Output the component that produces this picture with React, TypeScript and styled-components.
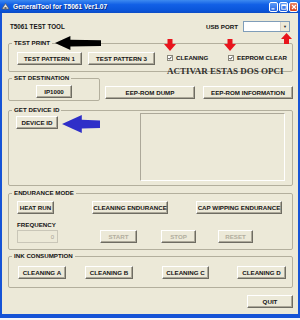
import React from 'react';
import styled, { createGlobalStyle } from 'styled-components';

const FACE = '#ece9d8';
const TEXT = '#141414';

const GlobalStyle = createGlobalStyle`
  html, body {
    margin: 0;
    padding: 0;
    background: #f4f6fb;
  }
  body {
    font-family: "Liberation Sans", Arial, sans-serif;
  }
`;

const Window = styled.div`
  position: relative;
  width: 300px;
  height: 318px;
  display: flex;
  flex-direction: column;
  background: #1653d6;
`;

const TitleBar = styled.div`
  height: 13px;
  display: flex;
  align-items: center;
  padding: 0 2px 0 1px;
  background: linear-gradient(to bottom, #3d8af0 0%, #1260e6 35%, #0a55da 80%, #0c4cc4 100%);
`;

const TitleText = styled.span`
  flex: 1;
  margin-left: 3px;
  color: #fff;
  font-size: 6.6px;
  font-weight: bold;
  text-shadow: 1px 1px 0 #0a2a80;
  white-space: nowrap;
`;

const TitleButton = styled.div<{ $close?: boolean }>`
  width: 9px;
  height: 10px;
  margin-left: 1px;
  box-sizing: border-box;
  border: 1px solid #fff;
  border-radius: 2px;
  background: ${(p) => (p.$close ? 'linear-gradient(#e8856a, #d9431c)' : 'linear-gradient(#5d9cf8, #2462e0)')};
  display: flex;
  align-items: center;
  justify-content: center;
`;

const Body = styled.div`
  flex: 1;
  margin: 0 2px 4px 2px;
  padding: 8px 5px 0 6px;
  background: ${FACE};
  display: flex;
  flex-direction: column;
`;

const HeaderRow = styled.div`
  height: 11px;
  display: flex;
  align-items: center;
`;

const AppName = styled.span`
  flex: 1;
  padding-left: 2px;
  font-size: 6.3px;
  font-weight: bold;
  color: ${TEXT};
`;

const SmallLabel = styled.span`
  font-size: 6.2px;
  font-weight: bold;
  color: ${TEXT};
  white-space: nowrap;
`;

const Combo = styled.div`
  width: 47px;
  height: 11px;
  margin: 0 3px 0 5px;
  box-sizing: border-box;
  border: 1px solid #7f9db9;
  background: #fff;
  display: flex;
  justify-content: flex-end;
`;

const ComboButton = styled.div`
  width: 8px;
  background: ${FACE};
  border-left: 1px solid #d4d0c8;
  display: flex;
  align-items: center;
  justify-content: center;
  font-size: 4px;
  color: #222;
`;

const Group = styled.fieldset<{ $width?: number }>`
  margin: 0;
  padding: 0;
  min-width: 0;
  box-sizing: border-box;
  width: ${(p) => (p.$width ? `${p.$width}px` : 'auto')};
  border: 1px solid #b3af9d;
  border-radius: 2px;
`;

const Legend = styled.legend`
  margin-left: 3px;
  padding: 0 2px;
  font-size: 6.2px;
  line-height: 8px;
  font-weight: bold;
  color: ${TEXT};
  white-space: nowrap;
`;

const Row = styled.div<{ $top: number; $bottom: number; $left?: number }>`
  display: flex;
  align-items: flex-end;
  margin-top: ${(p) => p.$top}px;
  padding: 0 0 ${(p) => p.$bottom}px ${(p) => p.$left ?? 0}px;
`;

const Button = styled.button<{ $w: number; $ml?: number }>`
  width: ${(p) => p.$w}px;
  height: 13px;
  margin: 0 0 0 ${(p) => p.$ml ?? 0}px;
  padding: 0;
  flex-shrink: 0;
  box-sizing: border-box;
  background: ${FACE};
  border: 1px solid;
  border-color: #fff #6e6c62 #6e6c62 #fff;
  box-shadow: inset -1px -1px 0 #aca899;
  font-family: "Liberation Sans", Arial, sans-serif;
  font-size: 6.2px;
  font-weight: bold;
  color: ${(p) => (p.disabled ? '#b2ae9e' : TEXT)};
  white-space: nowrap;
  overflow: hidden;
`;

const CheckItem = styled.label<{ $w?: number }>`
  width: ${(p) => (p.$w ? `${p.$w}px` : 'auto')};
  display: flex;
  align-items: center;
  gap: 3px;
  margin-bottom: 4px;
  font-size: 6.2px;
  font-weight: bold;
  color: ${TEXT};
  white-space: nowrap;
`;

const CheckBox = styled.span`
  width: 6px;
  height: 6px;
  box-sizing: border-box;
  border: 1px solid #8a877a;
  background: #fff;
  display: flex;
  align-items: center;
  justify-content: center;
`;

const SetRow = styled.div`
  margin-top: 2px;
  display: flex;
  align-items: flex-end;
`;

const CenterRow = styled.div`
  display: flex;
  justify-content: center;
  margin-top: 3px;
  padding-bottom: 2px;
`;

const SideButtons = styled.div`
  display: flex;
  margin-bottom: 2px;
`;

const DeviceRow = styled.div`
  display: flex;
  justify-content: space-between;
  align-items: flex-start;
  padding: 0 7px 4px 7px;
`;

const DeviceButton = styled(Button)`
  margin-top: 2px;
`;

const OutputBox = styled.div`
  width: 145px;
  height: 68px;
  margin-top: -1px;
  box-sizing: border-box;
  border: 1px solid;
  border-color: #aca899 #fff #fff #aca899;
  background: ${FACE};
`;

const FreqColumn = styled.div`
  display: flex;
  flex-direction: column;
`;

const FreqLabel = styled.span`
  font-size: 6.2px;
  line-height: 9px;
  font-weight: bold;
  color: ${TEXT};
`;

const FreqInput = styled.div`
  width: 41px;
  height: 13px;
  margin-top: 1px;
  box-sizing: border-box;
  border: 1px solid #c9c6b8;
  background: ${FACE};
  display: flex;
  align-items: center;
  justify-content: flex-end;
  padding-right: 3px;
  font-size: 6px;
  color: #a7a394;
`;

const GroupGap = styled.div<{ $h: number }>`
  height: ${(p) => p.$h}px;
  flex-shrink: 0;
`;

const QuitButton = styled(Button)`
  align-self: flex-end;
  margin-top: 7px;
`;

const Note = styled.span`
  position: absolute;
  left: 167px;
  top: 66px;
  font-family: "Liberation Serif", "Times New Roman", serif;
  font-size: 9px;
  font-weight: bold;
  color: #33322e;
  white-space: nowrap;
`;

const Arrow = styled.svg<{ $x: number; $y: number }>`
  position: absolute;
  left: ${(p) => p.$x}px;
  top: ${(p) => p.$y}px;
  overflow: visible;
`;

const Tick = () => (
  <svg width="4" height="4" viewBox="0 0 4 4">
    <path d="M0.4 2 L1.5 3.2 L3.6 0.6" fill="none" stroke="#222" strokeWidth="0.9" />
  </svg>
);

const LeftArrow = ({ x, y, color, w, h }: { x: number; y: number; color: string; w: number; h: number }) => (
  <Arrow $x={x} $y={y} width={w} height={h} viewBox={`0 0 ${w} ${h}`}>
    <polygon
      points={`0,${h / 2} ${h * 1.1},0 ${h * 1.1},${h * 0.27} ${w},${h * 0.3} ${w},${h * 0.72} ${h * 1.1},${h * 0.75} ${h * 1.1},${h}`}
      fill={color}
    />
  </Arrow>
);

const DownArrow = ({ x, y }: { x: number; y: number }) => (
  <Arrow $x={x} $y={y} width="12" height="12" viewBox="0 0 12 12">
    <polygon points="3.5,0 8.5,0 8.5,5 12,5 6,12 0,5 3.5,5" fill="#e8141c" />
  </Arrow>
);

const UpArrow = ({ x, y }: { x: number; y: number }) => (
  <Arrow $x={x} $y={y} width="11" height="11" viewBox="0 0 11 11">
    <polygon points="5.5,0 11,6 8,6 8,11 3,11 3,6 0,6" fill="#e8141c" />
  </Arrow>
);

export default function App() {
  return (
    <>
      <GlobalStyle />
      <Window>
        <TitleBar>
          <svg width="9" height="9" viewBox="0 0 9 9">
            <path d="M1 7 L4.5 1.5 L8 7 Z" fill="#e4e4e4" stroke="#555" strokeWidth="0.7" />
            <rect x="3.5" y="5" width="2" height="2.5" fill="#666" />
          </svg>
          <TitleText>GeneralTool for T5061 Ver1.07</TitleText>
          <TitleButton>
            <svg width="5" height="6" viewBox="0 0 5 6">
              <rect x="0.5" y="4.3" width="3" height="1.2" fill="#fff" />
            </svg>
          </TitleButton>
          <TitleButton>
            <svg width="6" height="6" viewBox="0 0 6 6">
              <rect x="0.8" y="0.8" width="4.4" height="4.4" fill="none" stroke="#fff" strokeWidth="0.9" />
              <rect x="0.8" y="0.8" width="4.4" height="1.2" fill="#fff" />
            </svg>
          </TitleButton>
          <TitleButton $close>
            <svg width="6" height="6" viewBox="0 0 6 6">
              <path d="M1 1 L5 5 M5 1 L1 5" stroke="#fff" strokeWidth="1.1" />
            </svg>
          </TitleButton>
        </TitleBar>

        <Body>
          <HeaderRow>
            <AppName>T5061 TEST TOOL</AppName>
            <SmallLabel>USB PORT</SmallLabel>
            <Combo>
              <ComboButton>▼</ComboButton>
            </Combo>
          </HeaderRow>

          <GroupGap $h={7} />
          <Group>
            <Legend>TEST PRINT</Legend>
            <Row $top={5} $bottom={6} $left={8}>
              <Button $w={65}>TEST PATTERN 1</Button>
              <Button $w={67} $ml={6}>TEST PATTERN 3</Button>
              <CheckItem $w={61} style={{ marginLeft: 12 }}>
                <CheckBox><Tick /></CheckBox>
                CLEANING
              </CheckItem>
              <CheckItem>
                <CheckBox><Tick /></CheckBox>
                EEPROM CLEAR
              </CheckItem>
            </Row>
          </Group>

          <SetRow>
            <Group $width={92}>
              <Legend>SET DESTINATION</Legend>
              <CenterRow>
                <Button $w={36}>IP1000</Button>
              </CenterRow>
            </Group>
            <SideButtons>
              <Button $w={90} $ml={5}>EEP-ROM DUMP</Button>
              <Button $w={90} $ml={8}>EEP-ROM INFORMATION</Button>
            </SideButtons>
          </SetRow>

          <GroupGap $h={5} />
          <Group>
            <Legend>GET DEVICE ID</Legend>
            <DeviceRow>
              <DeviceButton $w={42}>DEVICE ID</DeviceButton>
              <OutputBox />
            </DeviceRow>
          </Group>

          <GroupGap $h={3} />
          <Group>
            <Legend>ENDURANCE MODE</Legend>
            <Row $top={4} $bottom={0} $left={8}>
              <Button $w={37}>HEAT RUN</Button>
              <Button $w={76} $ml={38}>CLEANING ENDURANCE</Button>
              <Button $w={86} $ml={28}>CAP WIPPING ENDURANCE</Button>
            </Row>
            <Row $top={6} $bottom={6} $left={8}>
              <FreqColumn>
                <FreqLabel>FREQUENCY</FreqLabel>
                <FreqInput>0</FreqInput>
              </FreqColumn>
              <Button $w={37} $ml={42} disabled>START</Button>
              <Button $w={35} $ml={24} disabled>STOP</Button>
              <Button $w={35} $ml={22} disabled>RESET</Button>
            </Row>
          </Group>

          <GroupGap $h={2} />
          <Group>
            <Legend>INK CONSUMPTION</Legend>
            <Row $top={6} $bottom={8} $left={9}>
              <Button $w={48}>CLEANING A</Button>
              <Button $w={48} $ml={19}>CLEANING B</Button>
              <Button $w={47} $ml={29}>CLEANING C</Button>
              <Button $w={49} $ml={28}>CLEANING D</Button>
            </Row>
          </Group>

          <QuitButton $w={46}>QUIT</QuitButton>
        </Body>

        <Note>ACTIVAR ESTAS DOS OPCI</Note>
        <LeftArrow x={55} y={36} w={46} h={14} color="#000" />
        <LeftArrow x={62} y={115} w={38} h={18} color="#2f2fc8" />
        <DownArrow x={164} y={39} />
        <DownArrow x={224} y={39} />
        <UpArrow x={281} y={33} />
      </Window>
    </>
  );
}
